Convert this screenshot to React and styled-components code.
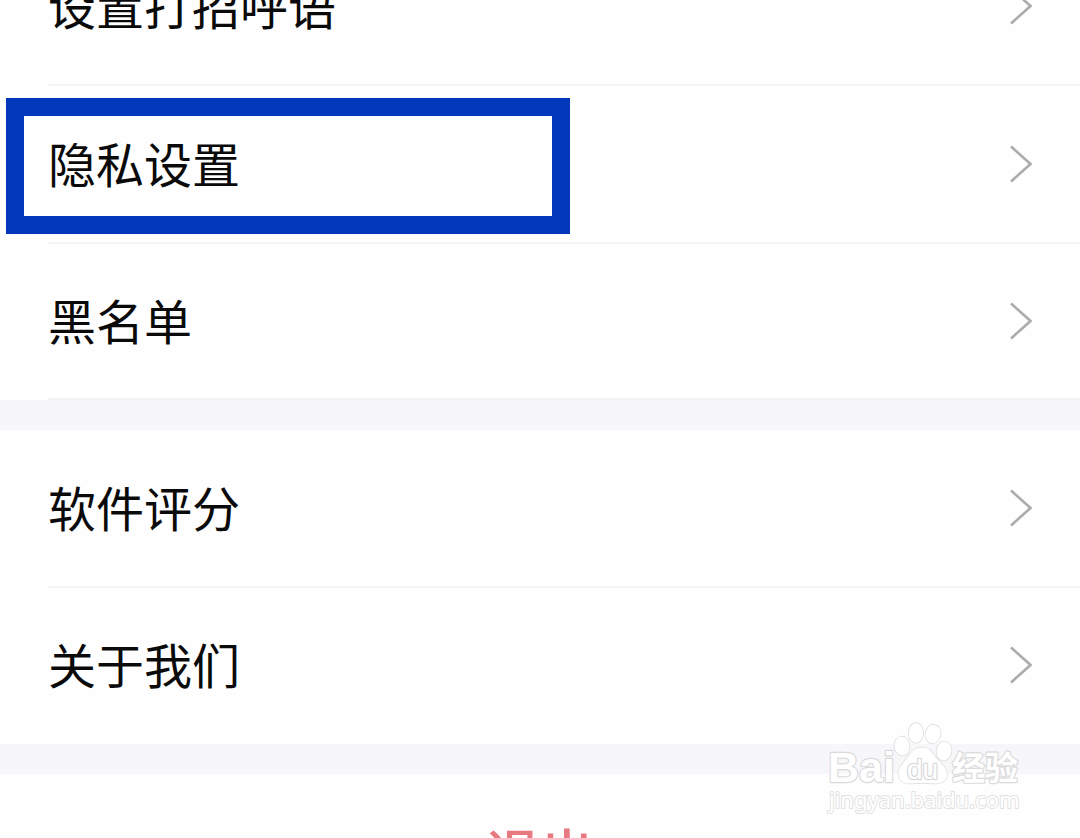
import React from "react";
import styled, { createGlobalStyle } from "styled-components";

const GlobalStyle = createGlobalStyle`
  * {
    box-sizing: border-box;
  }
  body {
    margin: 0;
    background: #fefefe;
    color: #0a0a0a;
    font-family: "Noto Sans CJK SC", "Noto Sans", sans-serif;
  }
`;

const Page = styled.main`
  position: relative;
  height: 100vh;
  overflow: hidden;
`;

/* The page is scrolled down a little, so the first row is cut at the top. */
const Scrolled = styled.div`
  margin-top: -72px;
`;

const Group = styled.ul`
  margin: 0;
  padding: 0;
  list-style: none;
  background: #fefefe;
`;

const Item = styled.li`
  position: relative;
  padding-left: 48px;
`;

const Row = styled.button`
  display: flex;
  align-items: center;
  justify-content: space-between;
  width: 100%;
  height: 158px;
  padding: 0 48px 0 0;
  border: 0;
  border-bottom: 2px solid ${(p) => (p.$plain ? "transparent" : "#f3f3f4")};
  background: none;
  color: inherit;
  font-family: inherit;
  font-size: 48px;
  line-height: 72px;
  text-align: left;
  cursor: pointer;

  ${Item}:last-child > & {
    height: 156px;
  }
`;

const Label = styled.span`
  padding-bottom: 4px;
`;

const Chevron = styled.svg`
  flex: none;
  width: 22px;
  height: 38px;
  fill: none;
  stroke: #acacac;
  stroke-width: 2.6;
`;

const Highlight = styled.span`
  position: absolute;
  inset: 12px auto 10px 6px;
  width: 564px;
  border: 18px solid #0238bc;
  pointer-events: none;
`;

const Band = styled.div`
  height: 30px;
  background: #f7f7fa;
`;

const Logout = styled.button`
  display: block;
  width: 100%;
  height: 156px;
  padding: 0;
  border: 0;
  background: #fefefe;
  color: #e77a80;
  font-family: inherit;
  font-size: 54px;
  font-weight: 500;
  line-height: 72px;
  cursor: pointer;
`;

const Watermark = styled.svg`
  position: absolute;
  right: 50px;
  bottom: 18px;
  width: 206px;
  height: 100px;
  fill: #ffffff;
  stroke: #dadadc;
  stroke-width: 1.4;
  stroke-linejoin: round;
  paint-order: stroke;
  pointer-events: none;
`;

const Brand = styled.text`
  font-family: "Liberation Sans", Arial, sans-serif;
  font-weight: 700;
  font-size: 43px;
  stroke-width: 2.4;
`;

const BrandInner = styled.text`
  font-family: "Liberation Sans", Arial, sans-serif;
  font-size: 28px;
  stroke-width: 2.6;
`;

const BrandCn = styled.text`
  font-family: "Noto Sans CJK SC", sans-serif;
  font-weight: 700;
  font-size: 33px;
  stroke-width: 2.4;
`;

const Site = styled.text`
  font-family: "Noto Sans", "Open Sans", sans-serif;
  font-size: 22px;
  stroke: #e2e2e4;
  stroke-width: 2;
`;

function SettingsRow({ label, highlighted, plain }) {
  return (
    <Item>
      <Row type="button" $plain={plain}>
        <Label>{label}</Label>
        <Chevron viewBox="0 0 22 38" aria-hidden="true">
          <path d="M1 1.5 L20.5 19 L1 36.5" />
        </Chevron>
      </Row>
      {highlighted && <Highlight />}
    </Item>
  );
}

function BaiduWatermark() {
  return (
    <Watermark viewBox="0 0 206 100">
      <Brand x="4" y="62">Bai</Brand>
      <ellipse cx="78" cy="26" rx="7.5" ry="9.5" transform="rotate(-8 78 26)" />
      <ellipse cx="92" cy="13" rx="7.2" ry="10" />
      <ellipse cx="109" cy="14" rx="7.5" ry="9.5" transform="rotate(10 109 14)" />
      <ellipse cx="120" cy="31" rx="7.5" ry="9.5" transform="rotate(8 120 31)" />
      <path d="M98 27.5 C106 27.5 109 34 113 39 C118 44 123 48 123 55 C123 61 117 64 110 63.5 C102 62.8 94 62.8 86 63.5 C79 64 74 60 74.5 53 C75 46 80 42 84 37 C88 31 91 27.5 98 27.5 Z" />
      <BrandInner x="83" y="59">du</BrandInner>
      <BrandCn x="128" y="60">经验</BrandCn>
      <Site x="5" y="88">jingyan.baidu.com</Site>
    </Watermark>
  );
}

export default function App() {
  return (
    <>
      <GlobalStyle />
      <Page>
        <Scrolled>
          <Group>
            <SettingsRow label="设置打招呼语" />
            <SettingsRow label="隐私设置" highlighted />
            <SettingsRow label="黑名单" />
          </Group>
          <Band />
          <Group>
            <SettingsRow label="软件评分" />
            <SettingsRow label="关于我们" plain />
          </Group>
          <Band />
          <Logout type="button">退出</Logout>
        </Scrolled>
        <BaiduWatermark />
      </Page>
    </>
  );
}
